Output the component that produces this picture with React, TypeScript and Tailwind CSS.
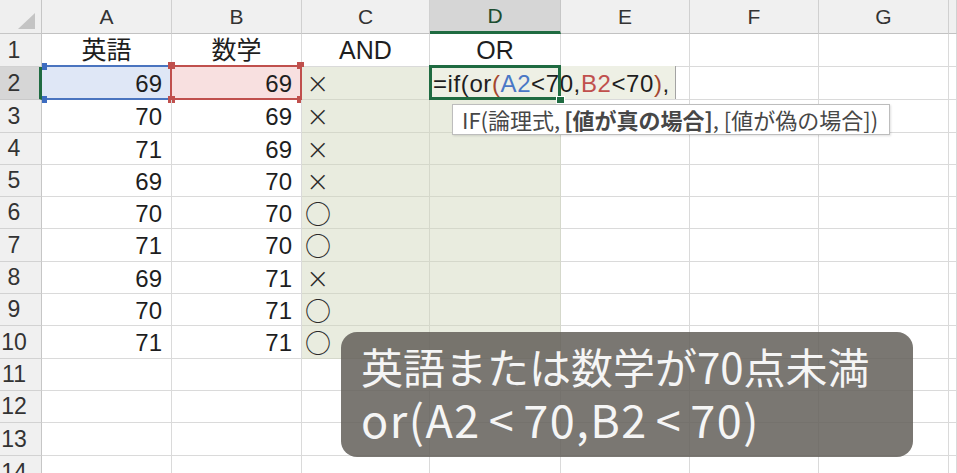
import React from "react";

const COLS = ["A", "B", "C", "D", "E", "F", "G", ""];
const scoreA = [69, 70, 71, 69, 70, 71, 69, 70, 71];
const scoreB = [69, 69, 69, 70, 70, 70, 71, 71, 71];
const marks = ["×", "×", "×", "×", "○", "○", "×", "○", "○"];
const titles = ["英語", "数学", "AND", "OR"];

function Corner() {
  return (
    <div className="relative bg-[#efefef] border-r border-b border-[#c6c6c6]">
      <svg className="absolute left-[18px] top-[13px]" width="17" height="16" viewBox="0 0 17 16">
        <polygon points="17,0 17,16 0,16" fill="#c4c4c4" />
      </svg>
    </div>
  );
}

function ColHeader({ label, active }: { label: string; active: boolean }) {
  return (
    <div
      className={`flex items-center justify-center border-r text-[21px] ${
        active
          ? "bg-[#d6d6d6] border-[#c6c6c6] border-b-[3px] border-b-[#1f6b41] text-[#1d4d30]"
          : "bg-[#f0f0f0] border-[#d0d0d0] border-b border-b-[#c2c2c2] text-[#333]"
      }`}
    >
      {label}
    </div>
  );
}

function RowHeader({ n }: { n: number }) {
  const active = n === 2;
  return (
    <div
      className={`flex items-center border-b text-[23px] text-[#333] ${
        active
          ? "bg-[#d6d6d6] border-[#c9c9c9] border-r-[3px] border-r-[#1f6b41]"
          : "bg-[#f0f0f0] border-[#d2d2d2] border-r border-r-[#c6c6c6]"
      }`}
    >
      <span className="w-[28px] text-center">{n}</span>
    </div>
  );
}

function FormulaEdit() {
  return (
    <>
      <div className="absolute left-0 -top-[1px] bottom-0 w-[246px] bg-[#eef0e5] border-r border-[#a3a3a3] flex items-center pl-[3px] pt-[2px] text-[24px] tracking-[0.6px] whitespace-nowrap text-[#1e1e1e]">
        <span>=if(or</span>
        <span className="text-[#a4462f]">(</span>
        <span className="text-[#4a78c6]">A2</span>
        <span>&lt;70,</span>
        <span className="text-[#c0504d]">B2</span>
        <span>&lt;70</span>
        <span className="text-[#a4462f]">)</span>
        <span>,</span>
      </div>
      <div className="absolute -left-[1px] -top-[2px] -right-[1px] -bottom-[1px] border-[3px] border-[#1f6b41]" />
      <div className="absolute -right-[5px] -bottom-[5px] w-[9px] h-[8px] bg-[#1f6b41] border border-white" />
    </>
  );
}

function DataCell({ row, col }: { row: number; col: number }) {
  const base = "relative flex items-center border-r border-b";
  const tinted = row >= 2 && row <= 10 && (col === 2 || col === 3);
  const border = tinted ? "border-[#d5d8cb] bg-[#e9ecdf]" : "border-[#dadada]";

  if (row === 1 && col < 4) {
    return (
      <div className={`${base} ${border} justify-center text-[25px] pt-[2px]`}>
        {titles[col]}
      </div>
    );
  }

  if (row >= 2 && row <= 10) {
    const i = row - 2;
    if (col === 0 || col === 1) {
      const value = col === 0 ? scoreA[i] : scoreB[i];
      return (
        <div className={`${base} ${border} justify-end pr-[9px] text-[24px] pt-[2px]`}>
          {row === 2 && col === 0 && (
            <>
              <div className="absolute left-0 right-0 -top-[2px] -bottom-[1px] bg-[#dfe7f6] border-y-2 border-[#4a74bf]" />
              <span className="absolute left-0 -top-[4px] w-[5px] h-[7px] bg-[#3d6cc0]" />
              <span className="absolute left-0 -bottom-[4px] w-[5px] h-[7px] bg-[#3d6cc0]" />
            </>
          )}
          {row === 2 && col === 1 && (
            <>
              <div className="absolute -left-[2px] -right-[1px] -top-[2px] -bottom-[1px] bg-[#f8e0e0] border-2 border-[#c0504d]" />
              <span className="absolute -left-[4px] -top-[5px] w-[7px] h-[7px] bg-[#c0504d]" />
              <span className="absolute -right-[3px] -top-[5px] w-[7px] h-[7px] bg-[#c0504d]" />
              <span className="absolute -left-[4px] -bottom-[4px] w-[7px] h-[7px] bg-[#c0504d]" />
              <span className="absolute -right-[3px] -bottom-[4px] w-[7px] h-[7px] bg-[#c0504d]" />
            </>
          )}
          <span className="relative">{value}</span>
        </div>
      );
    }
    if (col === 2) {
      const m = marks[i];
      return (
        <div className={`${base} ${border} pl-[3px]`}>
          {m === "×" ? (
            <span className="font-['DejaVu_Sans',sans-serif] font-extralight text-[28px] leading-none pt-[2px] pl-[1px] text-[#2a2a2a]">×</span>
          ) : (
            <span className="font-['Noto_Sans_CJK_JP',sans-serif] text-[26px] leading-none text-[#2a2a2a]">○</span>
          )}
        </div>
      );
    }
    if (col === 3 && row === 2) {
      return (
        <div className={`${base} ${border} z-10`}>
          <FormulaEdit />
        </div>
      );
    }
  }

  return <div className={`${base} ${border}`} />;
}

export default function App() {
  return (
    <div className="relative w-[957px] h-[473px] overflow-hidden bg-white font-['Liberation_Sans','Noto_Sans_CJK_JP',sans-serif] text-[#1e1e1e]">
      <div className="grid grid-cols-[42px_130px_130px_128px_131px_129px_129px_130px_1fr] grid-rows-[34px_33px_33px_33px_32px_32px_32px_33px_32px_32px_33px_32px_32px_33px_33px]">
        <Corner />
        {COLS.map((c, i) => (
          <ColHeader key={i} label={c} active={c === "D"} />
        ))}
        {Array.from({ length: 14 }, (_, r) => (
          <React.Fragment key={r}>
            <RowHeader n={r + 1} />
            {COLS.map((_, c) => (
              <DataCell key={c} row={r + 1} col={c} />
            ))}
          </React.Fragment>
        ))}
      </div>

      {/* function hint under the edited cell */}
      <div className="absolute left-[452px] top-[104px] w-[438px] h-[31px] flex items-center pl-[9px] bg-white border border-[#bdbdbd] shadow-[1px_1px_2px_rgba(0,0,0,0.12)] font-['Noto_Sans_CJK_JP',sans-serif] text-[22px] text-[#474747] whitespace-nowrap">
        IF(論理式, <span className="font-bold ml-[4px]">[値が真の場合]</span>, [値が偽の場合])
      </div>

      {/* caption */}
      <div className="absolute left-[341px] top-[332px] w-[572px] h-[125px] rounded-[16px] bg-[#635f59]/85 pl-[20px] pt-[8px] font-['Noto_Sans_CJK_JP',sans-serif] text-[#f5f5f5]">
        <div className="text-[42px] leading-[52px]">英語または数学が70点未満</div>
        <div className="flex text-[45px] leading-[54px] tracking-[1.5px] whitespace-nowrap">
          <span>or(A2</span>
          <span className="px-[8px]">&lt;</span>
          <span>70,B2</span>
          <span className="px-[8px]">&lt;</span>
          <span>70)</span>
        </div>
      </div>
    </div>
  );
}
